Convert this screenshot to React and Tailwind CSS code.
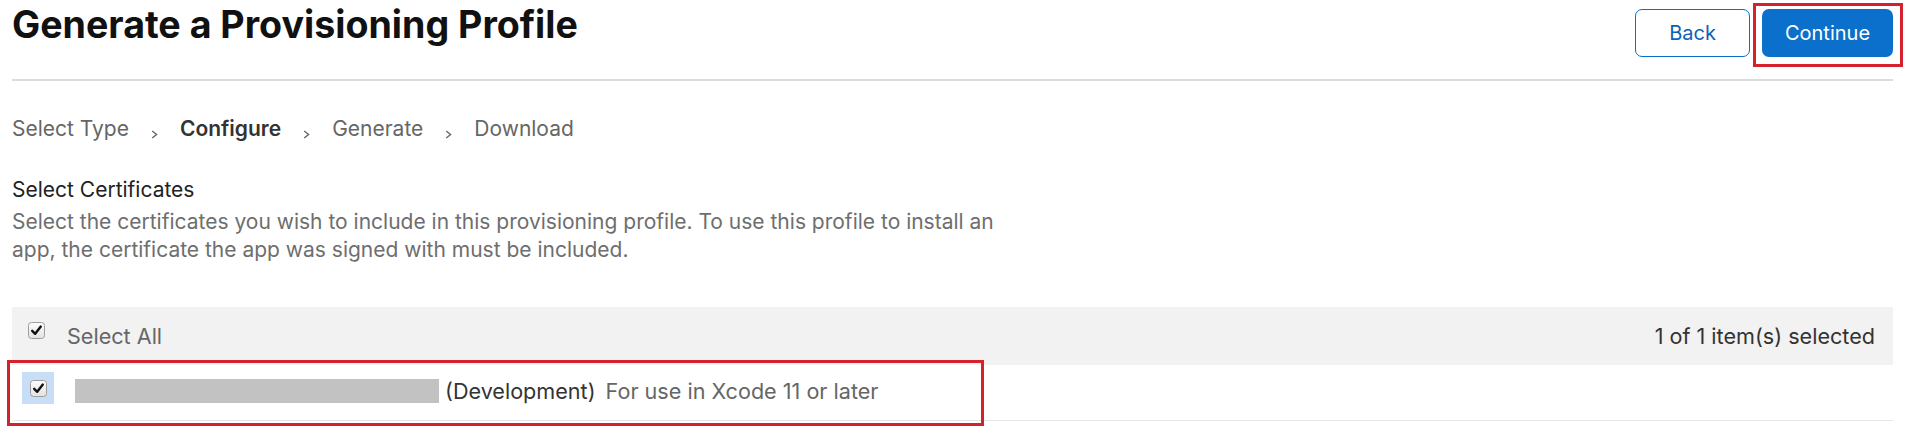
function Checkbox() {
    return (
        <svg width="17" height="17" viewBox="0 0 17 17" className="block">
            <defs>
                <linearGradient id="cbg" x1="0" y1="0" x2="0" y2="1">
                    <stop offset="0" stopColor="#fdfdfd" />
                    <stop offset="1" stopColor="#e2e2e2" />
                </linearGradient>
            </defs>
            <rect x="0.5" y="0.5" width="16" height="16" rx="3" fill="url(#cbg)" stroke="#9d9d9d" />
            <path d="M4.2 8.8 L7.2 11.8 L12.8 4.6" fill="none" stroke="#111" strokeWidth="2.4" strokeLinecap="round" strokeLinejoin="round" />
        </svg>
    );
}

function Chevron() {
    return (
        <svg width="7" height="9" viewBox="0 0 7 9" className="self-start mt-[15px]">
            <path d="M1.2 1 L5.6 4.5 L1.2 8" fill="none" stroke="#666" strokeWidth="1.4" />
        </svg>
    );
}

export default function App() {
    return (
        <div className="min-h-screen bg-white font-[Inter,sans-serif] pl-[12px] pr-[18px]">
            <header className="h-[81px] flex justify-between items-start border-b-2 border-[#dcdcdc]">
                <h1 className="mt-[3px] text-[37.6px] leading-[44px] font-bold text-[#111]">
                    Generate a Provisioning Profile
                </h1>
                <div className="mt-[9px] flex gap-[12px]">
                    <button className="h-[48px] w-[115px] rounded-[7px] border-[1.5px] border-[#0a6fc9] text-[#0a63b8] text-[20px]">
                        Back
                    </button>
                    <div className="relative">
                        <button className="h-[48px] w-[131px] rounded-[7px] bg-[#0a70cc] text-white text-[20px]">
                            Continue
                        </button>
                        <div className="absolute -left-[9px] -top-[6px] -right-[10px] -bottom-[10px] border-[3px] border-[#d3212d] pointer-events-none" />
                    </div>
                </div>
            </header>

            {/* steps */}
            <nav className="mt-[34px] flex gap-[22px] text-[21px] leading-[28px] text-[#666]">
                <span>Select Type</span>
                <Chevron />
                <span className="font-semibold text-[#333]">Configure</span>
                <Chevron />
                <span>Generate</span>
                <Chevron />
                <span>Download</span>
            </nav>

            <h2 className="mt-[33px] text-[21px] leading-[28px] text-[#222]">Select Certificates</h2>
            <p className="mt-[4px] max-w-[1010px] text-[21px] leading-[28px] text-[#6e6e6e]">
                Select the certificates you wish to include in this provisioning profile. To use this profile to install an app, the certificate the app was signed with must be included.
            </p>

            <div className="mt-[43px] text-[21.6px] leading-[28px]">
                <div className="h-[58px] bg-[#f2f2f2] flex items-center">
                    <div className="self-start mt-[15px] ml-[16px]">
                        <Checkbox />
                    </div>
                    <span className="ml-[22px] -mt-[1px] text-[#666]">Select All</span>
                    <span className="ml-auto mr-[18px] text-[#333]">1 of 1 item(s) selected</span>
                </div>
                <div className="relative h-[56px] border-b border-[#e6e6e6] flex items-start">
                    <div className="ml-[10px] mt-[7px] w-[32px] h-[32px] bg-[#c8def7] flex items-center justify-center">
                        <Checkbox />
                    </div>
                    <div className="ml-[21px] mt-[14px] w-[364px] h-[24px] bg-[#c2c2c2]" />
                    <span className="ml-[6px] mt-[12px] text-[#333]">(Development)</span>
                    <span className="ml-[10px] mt-[12px] text-[#666]">For use in Xcode 11 or later</span>
                    <div className="absolute -left-[5px] -top-[5px] w-[977px] h-[66px] border-[3px] border-[#d3212d] pointer-events-none" />
                </div>
            </div>
        </div>
    );
}
